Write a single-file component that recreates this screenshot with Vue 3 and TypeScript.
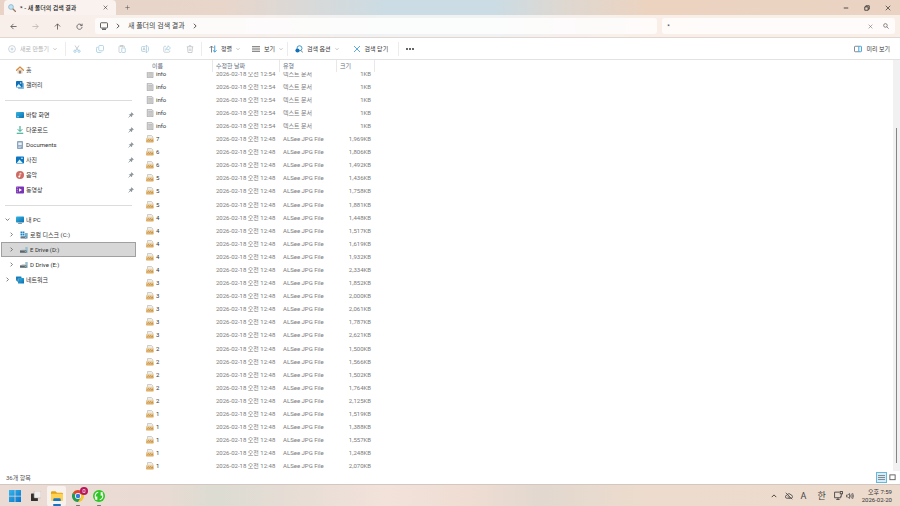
<script setup lang="ts">
import { ref } from 'vue'

interface NavItem { label: string; icon: string; pinned?: boolean; arrow?: 'open' | 'closed'; depth?: number; selected?: boolean }
interface FileRow { name: string; icon: string; date: string; type: string; size: string }

const query = ref('*')

const navGroups: NavItem[][] = [
  [
    { label: '홈', icon: 'home' },
    { label: '갤러리', icon: 'gallery' },
  ],
  [
    { label: '바탕 화면', icon: 'desktop', pinned: true },
    { label: '다운로드', icon: 'download', pinned: true },
    { label: 'Documents', icon: 'document', pinned: true },
    { label: '사진', icon: 'picture', pinned: true },
    { label: '음악', icon: 'music', pinned: true },
    { label: '동영상', icon: 'video', pinned: true },
  ],
  [
    { label: '내 PC', icon: 'pc', arrow: 'open' },
    { label: '로컬 디스크 (C:)', icon: 'sysdisk', arrow: 'closed', depth: 1 },
    { label: 'E Drive (D:)', icon: 'drive', arrow: 'closed', depth: 1, selected: true },
    { label: 'D Drive (E:)', icon: 'drive', arrow: 'closed', depth: 1 },
    { label: '네트워크', icon: 'network', arrow: 'closed' },
  ],
]

const editIcons = [
  { id: 'cut', label: '잘라내기' },
  { id: 'copy', label: '복사' },
  { id: 'paste', label: '붙여넣기' },
  { id: 'rename', label: '이름 바꾸기' },
  { id: 'share', label: '공유' },
  { id: 'trash', label: '삭제' },
]

const images: [string, string][] = [
  ['7', '1,969'], ['6', '1,806'], ['6', '1,492'],
  ['5', '1,436'], ['5', '1,758'], ['5', '1,881'],
  ['4', '1,448'], ['4', '1,517'], ['4', '1,619'], ['4', '1,932'], ['4', '2,334'],
  ['3', '1,852'], ['3', '2,000'], ['3', '2,061'], ['3', '1,787'], ['3', '2,621'],
  ['2', '1,500'], ['2', '1,566'], ['2', '1,502'], ['2', '1,764'], ['2', '2,125'],
  ['1', '1,519'], ['1', '1,388'], ['1', '1,557'], ['1', '1,248'], ['1', '2,070'],
]

const files: FileRow[] = [
  ...Array.from({ length: 5 }, () => ({
    name: 'info', icon: 'textfile', date: '2026-02-18 오전 12:54', type: '텍스트 문서', size: '1KB',
  })),
  ...images.map(([name, kb]) => ({
    name, icon: 'jpgfile', date: '2026-02-18 오전 12:48', type: 'ALSee JPG File', size: kb + 'KB',
  })),
]
</script>

<template>
  <svg class="sprite" aria-hidden="true">
    <defs>
      <linearGradient id="g-blue" x1="0" y1="0" x2="1" y2="1"><stop offset="0" stop-color="#35b6e0" /><stop offset="1" stop-color="#0a6db0" /></linearGradient>
      <linearGradient id="g-win" x1="0" y1="0" x2="1" y2="1"><stop offset="0" stop-color="#35b5ee" /><stop offset="1" stop-color="#0873c9" /></linearGradient>
      <linearGradient id="g-jpg" x1="0" y1="0" x2="0" y2="1"><stop offset="0" stop-color="#ecd9b4" /><stop offset="1" stop-color="#dba656" /></linearGradient>
    </defs>
    <symbol id="magnifier" viewBox="0 0 16 16"><path d="M9.5 9.5L15 15" stroke="#9a7b60" stroke-width="2.4" stroke-linecap="round" /><circle cx="6" cy="6" r="4.8" fill="#bfe3f6" stroke="#7faec9" stroke-width="1.4" /></symbol>
    <symbol id="x" viewBox="0 0 16 16"><path d="M2 2l12 12M14 2L2 14" fill="none" stroke="currentColor" stroke-width="1.7" /></symbol>
    <symbol id="plus" viewBox="0 0 16 16"><path d="M8 1v14M1 8h14" fill="none" stroke="currentColor" stroke-width="1.7" /></symbol>
    <symbol id="min" viewBox="0 0 16 16"><path d="M2 8h12" stroke="currentColor" stroke-width="2" /></symbol>
    <symbol id="restore" viewBox="0 0 16 16"><path d="M2 5h9v9H2zM5 5V2h9v9h-3" fill="none" stroke="currentColor" stroke-width="2" /></symbol>
    <symbol id="back" viewBox="0 0 16 16"><path d="M15 8H2M8 2L2 8l6 6" fill="none" stroke="currentColor" stroke-width="1.9" /></symbol>
    <symbol id="forward" viewBox="0 0 16 16"><path d="M1 8h13M8 2l6 6-6 6" fill="none" stroke="currentColor" stroke-width="1.9" /></symbol>
    <symbol id="up" viewBox="0 0 16 16"><path d="M8 15V2M2 8l6-6 6 6" fill="none" stroke="currentColor" stroke-width="1.9" /></symbol>
    <symbol id="reload" viewBox="0 0 16 16"><path d="M13.5 6A6 6 0 1 0 14 9M14 1.5V6H9.500" fill="none" stroke="currentColor" stroke-width="1.8" /></symbol>
    <symbol id="monitor" viewBox="0 0 16 16"><rect x="1" y="1.500" width="14" height="10.500" rx="1.500" fill="none" stroke="currentColor" stroke-width="1.7" /><path d="M4 15h8M6 12v3M10 12v3" stroke="currentColor" stroke-width="1.5" /></symbol>
    <symbol id="right" viewBox="0 0 16 16"><path d="M5 2l6 6-6 6" fill="none" stroke="currentColor" stroke-width="2.400" /></symbol>
    <symbol id="down" viewBox="0 0 16 16"><path d="M2 5l6 6 6-6" fill="none" stroke="currentColor" stroke-width="2.400" /></symbol>
    <symbol id="chev-up" viewBox="0 0 16 16"><path d="M2 11l6-6 6 6" fill="none" stroke="currentColor" stroke-width="2.600" /></symbol>
    <symbol id="search" viewBox="0 0 16 16"><circle cx="6.500" cy="6.500" r="4.800" fill="none" stroke="currentColor" stroke-width="2" /><path d="M10 10l5 5" stroke="currentColor" stroke-width="2" /></symbol>
    <symbol id="new" viewBox="0 0 16 16"><circle cx="8" cy="8" r="6.800" fill="none" stroke="#bcc3c8" stroke-width="1.400" /><path d="M8 5v6M5 8h6" stroke="#a9c9dc" stroke-width="1.500" /></symbol>
    <symbol id="cut" viewBox="0 0 16 16"><path d="M4 1l6.500 10M12 1L5.500 11" stroke="#b4bec6" stroke-width="1.500" /><circle cx="4" cy="12.500" r="2.300" fill="none" stroke="#93c5e0" stroke-width="1.500" /><circle cx="12" cy="12.500" r="2.300" fill="none" stroke="#93c5e0" stroke-width="1.500" /></symbol>
    <symbol id="copy" viewBox="0 0 16 16"><rect x="5.500" y="1" width="9.500" height="10.500" rx="2" fill="none" stroke="#9dc9e0" stroke-width="1.500" /><path d="M4 4.500H3A1.800 1.800 0 0 0 1 6.500V12a3 3 0 0 0 3 3h5a2 2 0 0 0 2-1.500" fill="none" stroke="#9dc9e0" stroke-width="1.500" /></symbol>
    <symbol id="paste" viewBox="0 0 16 16"><path d="M6 15H3.500A1.500 1.500 0 0 1 2 13.500V3.500A1.500 1.500 0 0 1 3.500 2h8A1.500 1.500 0 0 1 13 3.500V5M5 1h5v2.500H5z" fill="none" stroke="#bbc0c4" stroke-width="1.400" /><rect x="7.500" y="6" width="7" height="9" rx="1" fill="none" stroke="#9dc9e0" stroke-width="1.500" /></symbol>
    <symbol id="rename" viewBox="0 0 16 16"><path d="M9 3H3a2 2 0 0 0-2 2v6a2 2 0 0 0 2 2h6M13 3a2 2 0 0 1 2 2v6a2 2 0 0 1-2 2M11 1v14M9.500 1h3M9.500 15h3" fill="none" stroke="#9dc9e0" stroke-width="1.400" /><path d="M3.500 11L6 5l2.500 6M4.500 9h3" fill="none" stroke="#b4bec6" stroke-width="1.300" /></symbol>
    <symbol id="share" viewBox="0 0 16 16"><path d="M6 2.500H3.500A2 2 0 0 0 1.500 4.500v8a2 2 0 0 0 2 2h8a2 2 0 0 0 2-2V11" fill="none" stroke="#bbc0c4" stroke-width="1.400" /><path d="M10 1.500L15 6l-5 4.500V8Q6.500 8 5 10.500 5.500 5 10 4z" fill="none" stroke="#9dc9e0" stroke-width="1.400" /></symbol>
    <symbol id="trash" viewBox="0 0 16 16"><path d="M1.500 3.500h13M6 3V1.500h4V3M3 4l1 11h8l1-11M6.500 7v5M9.500 7v5" fill="none" stroke="#bbc0c4" stroke-width="1.500" /></symbol>
    <symbol id="sort" viewBox="0 0 16 16"><path d="M5 15V2M1 6l4-4 4 4" fill="none" stroke="#66727c" stroke-width="1.700" /><path d="M11.500 1v13M7.800 10.500l3.700 3.700 3.700-3.700" fill="none" stroke="#288fce" stroke-width="1.700" /></symbol>
    <symbol id="lines" viewBox="0 0 16 16"><path d="M0 3.500h16M0 8h16M0 12.500h16" stroke="currentColor" stroke-width="1.500" /></symbol>
    <symbol id="search-opt" viewBox="0 0 16 16"><circle cx="9" cy="6.500" r="5" fill="none" stroke="#2489c8" stroke-width="1.700" /><path d="M12 11l3.500 4" stroke="#58626b" stroke-width="1.700" /><circle cx="5" cy="11" r="4.200" fill="#0f70b8" /></symbol>
    <symbol id="preview" viewBox="0 0 16 16"><path d="M9.500 2.500H2.500A1.500 1.500 0 0 0 1 4v8a1.500 1.500 0 0 0 1.500 1.500h7" fill="none" stroke="#59656f" stroke-width="1.500" /><path d="M9.500 2.500h4A1.500 1.500 0 0 1 15 4v8a1.500 1.500 0 0 1-1.500 1.500h-4z" fill="#eaf6fc" stroke="#2489c8" stroke-width="1.500" /></symbol>
    <symbol id="pin" viewBox="0 0 16 16"><path d="M9.500 1.500l5 5-2 .8-2.300 2.400-.7 3.300-6-6 3.300-.7 2-2.500z" fill="#8d969c" stroke="#6f7a82" stroke-width="1" /><path d="M6 10l-4.500 4.500" stroke="#6f7a82" stroke-width="1.600" /></symbol>
    <symbol id="home" viewBox="0 0 16 16"><path d="M3 7h10v8H3z" fill="#d9d2ca" /><path d="M6.500 9.500h3V15h-3z" fill="#8a5b36" /><path d="M1 8.500L8 2l7 6.500" fill="none" stroke="#dc8b3c" stroke-width="2.500" stroke-linejoin="round" stroke-linecap="round" /></symbol>
    <symbol id="gallery" viewBox="0 0 16 16"><rect x="4" y="4" width="12" height="12" rx="1.500" fill="#83b9dc" /><rect width="13" height="13" rx="1.500" fill="#0e71b8" /><path d="M1 11l4.500-5 5.500 6.500H2z" fill="#dcf2fd" /><circle cx="9.500" cy="4" r="1.400" fill="#fff" /></symbol>
    <symbol id="desktop" viewBox="0 0 16 16"><rect y="2" width="16" height="12" rx="1.500" fill="url(#g-blue)" /><path d="M2 11.500h4" stroke="#bdf0ff" stroke-width="1.200" /></symbol>
    <symbol id="download" viewBox="0 0 16 16"><path d="M8 0v10M3.500 6.500L8 11l4.500-4.500M1.500 14.500h13" fill="none" stroke="#25a284" stroke-width="2" /></symbol>
    <symbol id="document" viewBox="0 0 16 16"><rect x="2" y="0" width="12" height="16" rx="1.500" fill="#8ba5bf" /><rect x="4.500" y="3" width="7" height="5" fill="#e9f1f8" /><path d="M4.500 10.500h7M4.500 13h5" stroke="#e3ecf4" stroke-width="1.200" /></symbol>
    <symbol id="picture" viewBox="0 0 16 16"><rect y="1" width="16" height="14" rx="1.500" fill="#0c75bc" /><path d="M1.500 14l5.500-7 6.500 7z" fill="#e2f5ff" /><circle cx="12" cy="4.500" r="1.600" fill="#fff" /></symbol>
    <symbol id="music" viewBox="0 0 16 16"><circle cx="8" cy="8" r="8" fill="#cf6a62" /><path d="M8 11V4l3 1.500" fill="none" stroke="#fff" stroke-width="1.500" /><circle cx="6.500" cy="11" r="1.800" fill="#fff" /></symbol>
    <symbol id="video" viewBox="0 0 16 16"><rect y="1" width="16" height="14" rx="1.500" fill="#7a35b4" /><path d="M6 4.500l6 3.500-6 3.500z" fill="#fff" /><path d="M2.500 2.500v11" stroke="#d8b2f2" stroke-width="1.600" stroke-dasharray="2 1.500" /></symbol>
    <symbol id="pc" viewBox="0 0 16 16"><rect y="1" width="16" height="12" rx="1.500" fill="url(#g-blue)" /><path d="M8 13v2M4 15.200h8" stroke="#607f93" stroke-width="1.600" /></symbol>
    <symbol id="sysdisk" viewBox="0 0 16 16"><path d="M1 1h3.500v3.500H1zM5.300 1h3.500v3.500H5.300zM1 5.300h3.500v3.500H1zM5.300 5.300h3.500v3.500H5.300z" fill="#1685cc" /><rect x="9.500" y="4" width="6" height="11" rx="1" fill="#76b0d0" /><rect x="1" y="10.500" width="12" height="4.500" rx="1" fill="#627785" /><circle cx="11" cy="12.700" r="1" fill="#bdeaff" /></symbol>
    <symbol id="drive" viewBox="0 0 16 16"><rect x="10.500" y="2" width="5" height="12" rx="1" fill="#9bbfd1" /><rect y="8.500" width="13" height="5" rx="1" fill="#59656d" /><path d="M2 8.500l2-2h7v2z" fill="#c2c9cd" /><circle cx="10.500" cy="11" r="1" fill="#9be8b5" /></symbol>
    <symbol id="network" viewBox="0 0 16 16"><rect y="1" width="11" height="8" rx="1" fill="#1680bd" /><rect x="4" y="4" width="12" height="11" rx="1" fill="url(#g-blue)" /><circle cx="4.500" cy="8" r="3.500" fill="#126aa6" /><path d="M1 8h7M4.500 4.500v7" stroke="#8bd3f3" stroke-width="1" /></symbol>
    <symbol id="textfile" viewBox="0 0 16 16"><path d="M2.500.5h8.500L14 3.500v12H2.500z" fill="#dedede" stroke="#929292" stroke-width="1.200" /><path d="M4.500 5h7.500M4.500 7.500h7.500M4.500 10h7.500M4.500 12.500h7.500" stroke="#a3a3a3" stroke-width="1" /></symbol>
    <symbol id="jpgfile" viewBox="0 0 16 16"><path d="M3 6V1h8L13.500 3.500v3" fill="#eee" stroke="#b7b1a8" stroke-width="1.200" /><rect x="0" y="5.500" width="15.500" height="9.500" rx="1.500" fill="url(#g-jpg)" /><path d="M3 11.500l2-2.500 2 2 2-2 2 2.500h2V9" fill="none" stroke="#b07a3a" stroke-width="1.200" /></symbol>
    <symbol id="windows" viewBox="0 0 16 16"><path d="M0 0h7.500v7.500H0zM8.500 0H16v7.500H8.500zM0 8.500h7.500V16H0zM8.500 8.500H16V16H8.500z" fill="url(#g-win)" /></symbol>
    <symbol id="taskview" viewBox="0 0 16 16"><rect x="0" y="4" width="11" height="12" rx="1" fill="#33302f" /><rect x="5" y="0" width="11" height="11" rx="1" fill="#f0eeec" stroke="#b5afab" stroke-width=".800" /></symbol>
    <symbol id="explorer" viewBox="0 0 16 16"><path d="M0 3a1.500 1.500 0 0 1 1.500-1.500H6L8 3.500h6.500A1.500 1.500 0 0 1 16 5v8H0z" fill="#e2a316" /><rect y="5" width="16" height="9.500" rx="1" fill="#ffd254" /><path d="M3 14.500V12.500A1.500 1.500 0 0 1 4.500 11h7a1.500 1.500 0 0 1 1.500 1.500v2z" fill="#1976c4" /></symbol>
    <symbol id="chrome" viewBox="0 0 16 16"><circle cx="8" cy="8" r="8" fill="#f4c52c" /><path d="M8 8L1.070 4A8 8 0 0 1 14.930 4z" fill="#dd4435" /><path d="M8 8L1.070 4A8 8 0 0 0 8 16l3.500-6z" fill="#239b56" /><circle cx="8" cy="8" r="4" fill="#fff" /><circle cx="8" cy="8" r="3" fill="#3779dc" /></symbol>
    <symbol id="sync" viewBox="0 0 16 16"><circle cx="8" cy="8" r="8" fill="#31c627" /><path d="M7 3A5 5 0 0 0 5 12V8.500M5.500 12.200H3M9 13A5 5 0 0 0 11 4V7.500M10.500 3.800H13" fill="none" stroke="#fff" stroke-width="1.500" /></symbol>
    <symbol id="cloud-off" viewBox="0 0 16 16"><path d="M4 12.500a3 3 0 0 1-.3-6A4.500 4.500 0 0 1 12 6a3.300 3.300 0 0 1 .5 6.500zM1.500 1.500l13 13M5 8.500l5 4" fill="none" stroke="currentColor" stroke-width="1.600" /></symbol>
    <symbol id="net" viewBox="0 0 16 16"><path d="M10 2H1v10h11V8.500M4 15h6M7 12v3" fill="none" stroke="currentColor" stroke-width="1.600" /><rect x="11" y="1" width="4" height="4" fill="none" stroke="currentColor" stroke-width="1.600" /><path d="M13 5v5" stroke="currentColor" stroke-width="1.500" /></symbol>
    <symbol id="sound" viewBox="0 0 16 16"><path d="M1 6h2.500L7 3v10l-3.500-3H1zM9 5.500q2 2.500 0 5M11 3.500q3.500 4.500 0 9M13 2q4 6 0 12" fill="none" stroke="currentColor" stroke-width="1.400" /></symbol>
    <symbol id="square" viewBox="0 0 16 16"><rect x="2" y="2" width="12" height="11" fill="none" stroke="currentColor" stroke-width="2" /></symbol>
  </svg>

  <div class="screen">
    <header class="chrome">
      <div class="titlebar">
        <div class="tab">
          <svg class="i8"><use href="#magnifier" /></svg>
          <span class="tab-title">* - 새 폴더의 검색 결과</span>
          <button class="plain" aria-label="탭 닫기"><svg class="i5"><use href="#x" /></svg></button>
        </div>
        <button class="plain add" aria-label="새 탭"><svg class="i5"><use href="#plus" /></svg></button>
        <div class="window-buttons">
          <button class="plain" aria-label="최소화"><svg class="i6"><use href="#min" /></svg></button>
          <button class="plain" aria-label="이전 크기로"><svg class="i6"><use href="#restore" /></svg></button>
          <button class="plain" aria-label="닫기"><svg class="i6"><use href="#x" /></svg></button>
        </div>
      </div>
      <div class="navbar">
        <div class="nav-buttons">
          <button class="plain" aria-label="뒤로"><svg class="i7"><use href="#back" /></svg></button>
          <button class="plain dim" aria-label="앞으로" disabled><svg class="i7"><use href="#forward" /></svg></button>
          <button class="plain" aria-label="위로"><svg class="i7"><use href="#up" /></svg></button>
          <button class="plain" aria-label="새로 고침"><svg class="i7"><use href="#reload" /></svg></button>
        </div>
        <div class="address">
          <svg class="i8"><use href="#monitor" /></svg>
          <svg class="i6"><use href="#right" /></svg>
          <span class="crumb">새 폴더의 검색 결과</span>
          <svg class="i6"><use href="#right" /></svg>
        </div>
        <div class="searchbox">
          <input v-model="query" aria-label="검색" type="text" />
          <button class="plain" aria-label="지우기"><svg class="i5"><use href="#x" /></svg></button>
          <button class="plain" aria-label="검색 실행"><svg class="i6"><use href="#search" /></svg></button>
        </div>
      </div>
    </header>

    <div class="toolbar">
      <div class="group new">
        <button class="plain tool dim" disabled><svg class="i8"><use href="#new" /></svg>새로 만들기<svg class="i4"><use href="#down" /></svg></button>
      </div>
      <div class="group edit">
        <button v-for="e in editIcons" :key="e.id" class="plain" :aria-label="e.label" disabled><svg class="i8"><use :href="'#' + e.id" /></svg></button>
      </div>
      <div class="group view">
        <button class="plain tool"><svg class="i8"><use href="#sort" /></svg>정렬<svg class="i4"><use href="#down" /></svg></button>
        <button class="plain tool"><svg class="i8"><use href="#lines" /></svg>보기<svg class="i4"><use href="#down" /></svg></button>
      </div>
      <div class="group find">
        <button class="plain tool"><svg class="i8"><use href="#search-opt" /></svg>검색 옵션<svg class="i4"><use href="#down" /></svg></button>
        <button class="plain tool"><svg class="i8 blue"><use href="#x" /></svg>검색 닫기</button>
      </div>
      <button class="plain more" aria-label="자세히"><i></i><i></i><i></i></button>
      <button class="plain tool preview"><svg class="i8"><use href="#preview" /></svg>미리 보기</button>
    </div>

    <main class="content">
      <nav class="sidebar">
        <ul v-for="(group, gi) in navGroups" :key="gi">
          <li v-for="item in group" :key="item.label">
            <a href="#" :class="{ selected: item.selected, nested: item.depth }" @click.prevent>
              <span class="arrow"><svg v-if="item.arrow" class="i5"><use :href="item.arrow === 'open' ? '#down' : '#right'" /></svg></span>
              <svg class="i8"><use :href="'#' + item.icon" /></svg>
              <span class="nav-label">{{ item.label }}</span>
              <svg v-if="item.pinned" class="i6"><use href="#pin" /></svg>
            </a>
          </li>
        </ul>
      </nav>

      <table class="files">
        <thead>
          <tr><th scope="col">이름</th><th scope="col">수정한 날짜</th><th scope="col">유형</th><th scope="col">크기</th></tr>
        </thead>
        <tbody>
          <tr v-for="(f, i) in files" :key="i">
            <td class="name"><svg class="i8"><use :href="'#' + f.icon" /></svg>{{ f.name }}</td>
            <td>{{ f.date }}</td>
            <td>{{ f.type }}</td>
            <td class="size">{{ f.size }}</td>
          </tr>
        </tbody>
      </table>

      <div class="scrollbar"><div class="thumb"></div></div>
    </main>

    <footer class="status">
      <span>36개 항목</span>
      <div class="view-modes">
        <button class="plain mode active" aria-label="자세히 보기"><svg class="i7"><use href="#lines" /></svg></button>
        <button class="plain mode" aria-label="큰 아이콘"><svg class="i7"><use href="#square" /></svg></button>
      </div>
    </footer>

    <div class="taskbar">
      <div class="apps">
        <button class="plain app" aria-label="시작"><svg class="i12"><use href="#windows" /></svg></button>
        <button class="plain app" aria-label="작업 보기"><svg class="i10"><use href="#taskview" /></svg></button>
        <button class="plain app current" aria-label="파일 탐색기"><svg class="i12"><use href="#explorer" /></svg></button>
        <button class="plain app running" aria-label="Chrome"><svg class="i12"><use href="#chrome" /></svg><span class="badge">0</span></button>
        <button class="plain app running" aria-label="동기화"><svg class="i12"><use href="#sync" /></svg></button>
      </div>
      <div class="tray">
        <button class="plain" aria-label="숨겨진 아이콘"><svg class="i6"><use href="#chev-up" /></svg></button>
        <button class="plain" aria-label="OneDrive"><svg class="i8"><use href="#cloud-off" /></svg></button>
        <button class="plain ime">A</button>
        <button class="plain ime korean">한</button>
        <div class="devices">
          <button class="plain" aria-label="네트워크 상태"><svg class="i9"><use href="#net" /></svg></button>
          <button class="plain" aria-label="볼륨"><svg class="i8"><use href="#sound" /></svg></button>
        </div>
        <div class="clock"><span>오후 7:59</span><span>2026-02-20</span></div>
      </div>
    </div>
  </div>
</template>

<style>
body { margin: 0; }
</style>

<style scoped>
.sprite { position: absolute; width: 0; height: 0; }
.screen {
  display: flex; flex-direction: column; height: 100vh; overflow: hidden;
  background: #fff; color: #3c3c3c;
  font: 6px/8px Roboto, "Noto Sans CJK KR", sans-serif;
  white-space: nowrap;
}
svg { display: block; flex: none; }
.i4 { width: 4px; height: 4px; }
.i5 { width: 5px; height: 5px; }
.i6 { width: 6px; height: 6px; }
.i7 { width: 7px; height: 7px; }
.i8 { width: 8px; height: 8px; }
.i9 { width: 9px; height: 9px; }
.i10 { width: 10px; height: 10px; }
.i12 { width: 12px; height: 12px; }
.plain {
  display: flex; align-items: center; justify-content: center;
  padding: 0; border: 0; background: none; color: inherit; font: inherit;
}
.chrome { background: linear-gradient(90deg, #e8d3c6 0%, #e8d6cb 25%, #d9d9d8 34%, #cbdce4 43%, #cbdce4 55%, #ddd8d2 62%, #ecd3c0 72%, #ead3c3 100%); }
.titlebar { display: flex; align-items: stretch; height: 15px; }
.tab {
  display: flex; align-items: center; gap: 4px; width: 112px; margin-left: 4px; padding: 0 8px 0 4px;
  box-sizing: border-box; border-radius: 4px 4px 0 0; background: #f9f2ee; color: #222;
}
.tab-title { flex: 1; font-weight: 500; }
.add { width: 22px; color: #555; }
.window-buttons { display: flex; gap: 15px; margin-left: auto; padding-right: 9px; color: #222; }
.navbar {
  display: flex; align-items: center; gap: 5px; height: 23px; padding-right: 5px; box-sizing: border-box;
  background: rgba(255, 251, 249, 0.7); border-bottom: 1px solid #e2d6d1;
}
.nav-buttons { display: grid; grid-template-columns: repeat(4, 1fr); width: 90px; padding-left: 2px; box-sizing: border-box; color: #555; }
.nav-buttons .dim { color: #bdb7b4; }
.address, .searchbox { display: flex; align-items: center; height: 16px; box-sizing: border-box; border-radius: 3px; background: rgba(255, 255, 255, 0.75); }
.address { flex: 1; gap: 7px; padding-left: 5px; color: #444; }
.crumb { font-size: 7px; }
.searchbox { width: 26%; gap: 10px; padding: 0 6px 0 5px; color: #666; }
.searchbox input { flex: 1; min-width: 0; padding: 0; border: 0; outline: 0; background: none; color: #333; font: inherit; }
.toolbar { display: flex; align-items: center; height: 22px; box-sizing: border-box; padding: 0 10px 0 8px; border-bottom: 1px solid #e2e2e2; color: #333; }
.group { display: flex; align-items: center; height: 14px; box-sizing: border-box; border-right: 1px solid #ececec; }
.tool { gap: 4px; }
.tool .i4 { color: #999; }
.toolbar .dim { color: #b3b3b3; }
.new { width: 58px; }
.edit { display: grid; grid-template-columns: repeat(6, 1fr); width: 136px; }
.view { width: 86px; padding-left: 7px; gap: 12px; }
.find { width: 111px; padding-left: 7px; gap: 14px; }
.blue { color: #3f9cd3; }
.more { gap: 1px; width: 22px; }
.more i { width: 2px; height: 2px; border-radius: 50%; background: #333; }
.preview { margin-left: auto; }
.content { display: flex; flex: 1; min-height: 0; }
.sidebar { width: 137px; flex: none; padding: 2px 0; box-sizing: border-box; }
ul { margin: 0 5px; padding: 0; list-style: none; }
ul + ul { margin-top: 8px; padding-top: 6px; border-top: 1px solid #dcdcdc; }
.sidebar a {
  display: flex; align-items: center; gap: 2px; height: 15px; box-sizing: border-box; margin: 0 -4px;
  padding: 0 1px 0 3px; border: 1px solid transparent; color: #333; text-decoration: none;
}
.sidebar a.nested { padding-left: 7px; }
.sidebar a.selected { background: #d7d7d7; border-color: #a0a0a0; }
.arrow { width: 9px; color: #555; }
.nav-label { flex: 1; }
.files { display: flex; flex-direction: column; width: 238px; margin-bottom: -2px; overflow: hidden; }
.files tr { display: grid; grid-template-columns: 76px 67px 57px 38px; align-items: center; }
.files th { height: 12px; padding: 2px 0 0 3px; box-sizing: border-box; border-right: 1px solid #e8e8e8; color: #63707f; font-weight: 400; text-align: left; }
.files th:first-child { padding-left: 15px; }
.files thead { position: relative; z-index: 1; background: #fff; }
.files tbody { display: grid; grid-auto-rows: 1fr; flex: 1; min-height: 0; margin-top: -5px; }
.files td { padding: 0 0 0 3px; color: #7b7b7b; }
.files .name { display: flex; align-items: center; gap: 2px; padding-left: 9px; color: #333; }
.files .size { padding: 0 4px 0 0; text-align: right; }
.scrollbar { display: flex; justify-content: center; width: 7px; margin-left: auto; background: #f1f1f1; }
.thumb { width: 1px; margin: 68px 0 8px; background: #858585; }
.status { display: flex; align-items: center; justify-content: space-between; height: 13px; padding: 0 2px 0 6px; color: #555; }
.view-modes { display: flex; color: #555; }
.mode { width: 11px; height: 11px; box-sizing: border-box; }
.mode.active { background: #d5edf8; border: 1px solid #6bb7d8; }
.taskbar {
  display: flex; align-items: center; justify-content: space-between; height: 22px; box-sizing: border-box; padding: 0 8px 0 5px;
  border-top: 1px solid #d3c7c2;
  background: linear-gradient(90deg, #ebdbd5 0%, #e9dbd3 18%, #dcdcd2 24%, #e6ddd5 32%, #f2e2da 43%, #efddd3 52%, #e2d8cf 60%, #eddccd 72%, #ecdacd 100%);
}
.apps { display: flex; gap: 2px; }
.app { position: relative; width: 19px; height: 20px; }
.current { background: #f8f2ee; border-radius: 2px; }
.current::after, .running::after { content: ""; position: absolute; bottom: 0; left: 50%; width: 8px; height: 2px; margin-left: -4px; border-radius: 1px; background: #1474c4; }
.running::after { width: 4px; height: 1px; margin-left: -2px; background: #777; }
.badge { position: absolute; top: 1px; right: -1px; width: 8px; height: 8px; border-radius: 50%; background: #b8175c; color: #fff; }
.tray { display: flex; align-items: center; gap: 8px; color: #444; }
.ime { font-size: 9px; }
.korean { margin-left: 3px; }
.devices { display: flex; gap: 3px; }
.clock { display: flex; flex-direction: column; align-items: flex-end; color: #333; }
</style>
